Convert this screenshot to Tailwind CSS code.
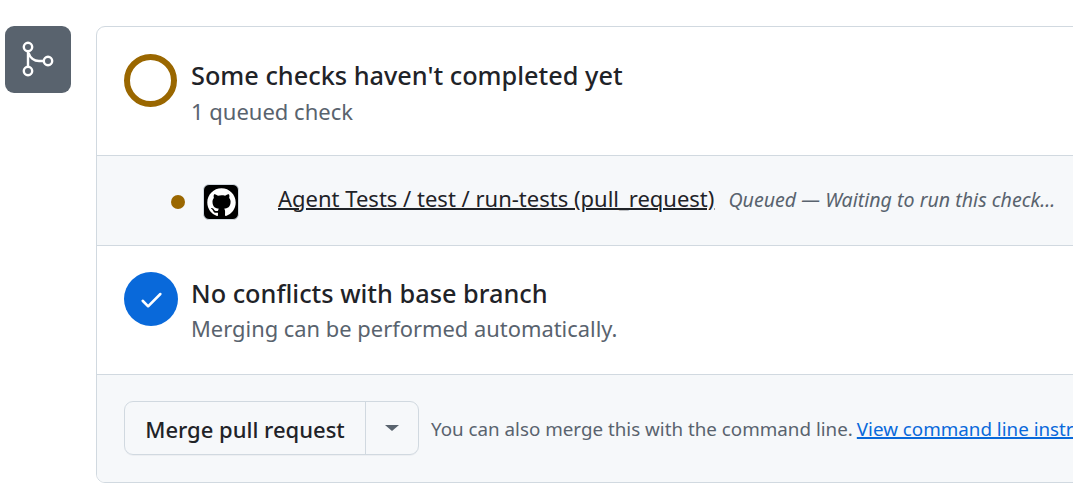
<!DOCTYPE html>
<html lang="en">
<head>
    <meta charset="UTF-8">
    <title>Merge box</title>
    <script src="https://cdn.jsdelivr.net/npm/@tailwindcss/browser@4"></script>
</head>
<body class="bg-white text-[#1f2328] font-['Noto_Sans',sans-serif] overflow-hidden">
    <div class="flex w-[1073px] h-[492px] overflow-hidden pt-[26px] pl-[5px]">
        <!-- Merge icon -->
        <div class="w-[66px] h-[67px] shrink-0 rounded-[9px] bg-[#59636e]">
            <svg class="w-[66px] h-[67px] text-white" viewBox="0 0 66 67" fill="none" stroke="currentColor" stroke-width="2.4"><circle cx="23" cy="21" r="4.2"/><circle cx="23" cy="45" r="4.2"/><circle cx="43" cy="35" r="4.2"/><path d="M23 25.2V40.8"/><path d="M23.5 27C25 31.5 29 35 34 35H38.8"/></svg>
        </div>

        <!-- Card -->
        <div class="ml-[25px] w-[1100px] h-[457px] shrink-0 border border-[#d1d9e0] rounded-[9px] overflow-hidden">
            <div class="h-[129px] flex items-start pt-[27px] pl-[27px] border-b border-[#d1d9e0]">
                <div class="w-[53px] h-[53px] rounded-full border-[6px] border-[#9a6700] shrink-0"></div>
                <div class="ml-[14px] mt-[3px]">
                    <div class="text-[25.3px] leading-[36px] font-medium whitespace-nowrap">Some checks haven't completed yet</div>
                    <div class="text-[22px] leading-[36px] text-[#59636e] whitespace-nowrap">1 queued check</div>
                </div>
            </div>

            <div class="h-[90px] flex items-center bg-[#f6f8fa] border-b border-[#d1d9e0] pl-[74px] whitespace-nowrap">
                <div class="w-[14px] h-[14px] mt-[3px] rounded-full bg-[#9a6700] shrink-0"></div>
                <div class="ml-[18px] mt-[3px] w-[36px] h-[36px] rounded-[6px] bg-black border border-[#d1d9e0] shrink-0 flex items-center justify-center">
                    <svg class="w-[31px] h-[31px] text-white" viewBox="0 0 24 24" fill="currentColor"><path d="M12 1C5.923 1 1 5.923 1 12c0 4.867 3.149 8.979 7.521 10.436.55.096.756-.233.756-.522 0-.262-.013-1.128-.013-2.049-2.764.509-3.479-.674-3.699-1.292-.124-.317-.66-1.293-1.127-1.554-.385-.207-.936-.715-.014-.729.866-.014 1.485.797 1.691 1.128.99 1.663 2.571 1.196 3.204.907.096-.715.385-1.196.701-1.471-2.448-.275-5.005-1.224-5.005-5.432 0-1.196.426-2.186 1.128-2.956-.111-.275-.495-1.402.11-2.915 0 0 .921-.288 3.024 1.128a10.193 10.193 0 0 1 2.75-.371c.936 0 1.871.123 2.75.371 2.104-1.43 3.025-1.128 3.025-1.128.605 1.513.221 2.64.111 2.915.701.77 1.127 1.747 1.127 2.956 0 4.222-2.571 5.157-5.019 5.432.399.344.743 1.004.743 2.035 0 1.471-.014 2.654-.014 3.025 0 .289.206.632.756.522C19.851 20.979 23 16.854 23 12c0-6.077-4.922-11-11-11Z"/></svg>
                </div>
                <a href="#" class="ml-[39px] mb-[4px] text-[22px] underline decoration-2">Agent Tests / test / run-tests (pull_request)</a>
                <span class="ml-[14px] mb-[2px] text-[19.6px] italic text-[#59636e]">Queued — Waiting to run this check...</span>
            </div>

            <div class="h-[129px] flex items-start pt-[26px] pl-[27px] border-b border-[#d1d9e0]">
                <div class="w-[54px] h-[54px] rounded-full bg-[#0969da] shrink-0 flex items-center justify-center">
                    <svg class="w-[27px] h-[27px] text-white" viewBox="0 0 16 16" fill="currentColor"><path d="M13.78 4.22a.75.75 0 0 1 0 1.06l-7.25 7.25a.75.75 0 0 1-1.06 0L2.22 9.28a.751.751 0 0 1 .018-1.042.751.751 0 0 1 1.042-.018L6 10.94l6.72-6.72a.75.75 0 0 1 1.06 0Z"/></svg>
                </div>
                <div class="ml-[13px] mt-[3px]">
                    <div class="text-[25.3px] leading-[36px] font-medium whitespace-nowrap">No conflicts with base branch</div>
                    <div class="text-[21.9px] leading-[36px] text-[#59636e] whitespace-nowrap">Merging can be performed automatically.</div>
                </div>
            </div>

            <div class="h-[107px] flex items-center bg-[#f6f8fa] pl-[27px] pb-[1px] whitespace-nowrap">
                <div class="flex h-[54px] w-[295px] shrink-0 border border-[#d1d9e0] rounded-[9px] shadow-[0_1px_0_rgba(31,35,40,0.04)]">
                    <button class="w-[241px] pt-[2px] text-[22px] font-medium border-r border-[#d1d9e0]">Merge pull request</button>
                    <button class="flex-1 flex items-center justify-center">
                        <span class="w-0 h-0 border-x-[7px] border-x-transparent border-t-[6px] border-t-[#59636e]"></span>
                    </button>
                </div>
                <span class="ml-[12px] pt-[3px] text-[18.8px] text-[#59636e]">You can also merge this with the command line.</span>
                <a href="#" class="ml-[4px] pt-[3px] text-[18.8px] text-[#0969da] underline decoration-2">View command line instructions</a>
            </div>
        </div>
    </div>
</body>
</html>
